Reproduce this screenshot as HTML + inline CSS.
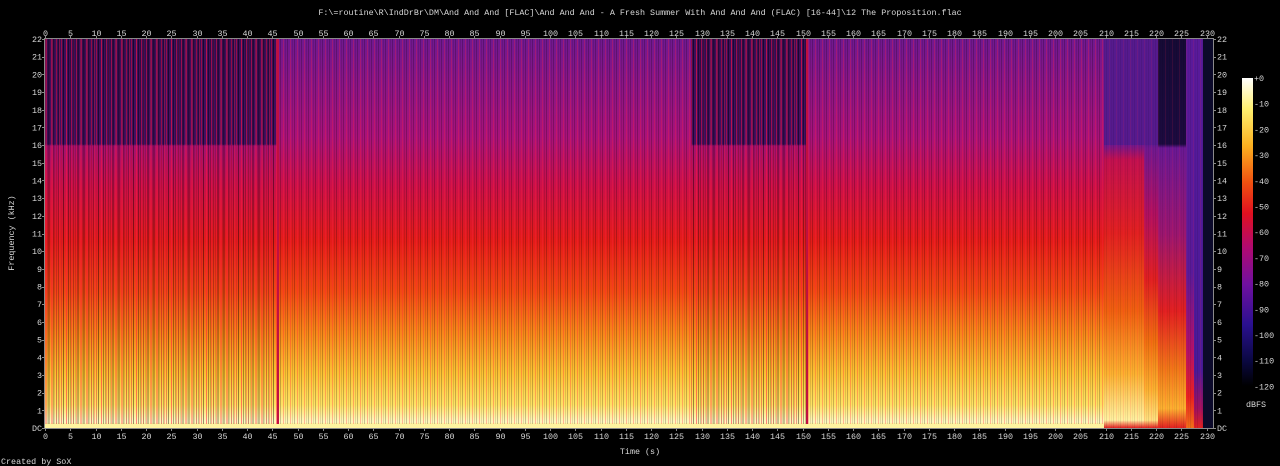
<!DOCTYPE html>
<html><head><meta charset="utf-8"><style>
html,body{margin:0;padding:0;background:#000;}
svg{display:block}
text{font-family:"Liberation Mono",monospace;font-size:8.4px;fill:#d8d8d8;}
</style></head><body>
<svg width="1280" height="466" viewBox="0 0 1280 466" xmlns="http://www.w3.org/2000/svg">
<defs>
<linearGradient id="gB" x1="0" y1="39" x2="0" y2="428" gradientUnits="userSpaceOnUse">
<stop offset="0" stop-color="#701890"/><stop offset="0.25" stop-color="#a8127a"/>
<stop offset="0.38" stop-color="#cc1048"/><stop offset="0.52" stop-color="#e41c18"/>
<stop offset="0.65" stop-color="#f24a12"/><stop offset="0.76" stop-color="#f88a1a"/>
<stop offset="0.86" stop-color="#fcc234"/><stop offset="0.94" stop-color="#ffe264"/>
<stop offset="0.985" stop-color="#fff8c0"/><stop offset="1" stop-color="#ffe040"/>
</linearGradient>
<linearGradient id="gA" x1="0" y1="39" x2="0" y2="428" gradientUnits="userSpaceOnUse">
<stop offset="0" stop-color="#3a0e58"/><stop offset="0.27" stop-color="#440f62"/>
<stop offset="0.275" stop-color="#a61070"/>
<stop offset="0.38" stop-color="#c81048"/><stop offset="0.52" stop-color="#e21c1a"/>
<stop offset="0.65" stop-color="#f04814"/><stop offset="0.76" stop-color="#f68618"/>
<stop offset="0.86" stop-color="#fbc030"/><stop offset="0.94" stop-color="#ffe060"/>
<stop offset="0.985" stop-color="#fff8c0"/><stop offset="1" stop-color="#ffe040"/>
</linearGradient>
<linearGradient id="gE1" x1="0" y1="39" x2="0" y2="428" gradientUnits="userSpaceOnUse">
<stop offset="0" stop-color="#5a1a90"/><stop offset="0.27" stop-color="#6c1890"/>
<stop offset="0.31" stop-color="#c01050"/><stop offset="0.5" stop-color="#e02020"/>
<stop offset="0.7" stop-color="#f06010"/><stop offset="0.86" stop-color="#fcb030"/>
<stop offset="0.98" stop-color="#fff0a0"/><stop offset="1" stop-color="#e02020"/>
</linearGradient>
<linearGradient id="gE2" x1="0" y1="39" x2="0" y2="428" gradientUnits="userSpaceOnUse">
<stop offset="0" stop-color="#5a1a90"/><stop offset="0.27" stop-color="#5c1a90"/>
<stop offset="0.28" stop-color="#701890"/><stop offset="0.45" stop-color="#b01060"/>
<stop offset="0.62" stop-color="#e02020"/><stop offset="0.78" stop-color="#f07010"/>
<stop offset="0.9" stop-color="#fcb030"/><stop offset="0.98" stop-color="#ffe080"/><stop offset="1" stop-color="#e02020"/>
</linearGradient>
<linearGradient id="gE3" x1="0" y1="39" x2="0" y2="428" gradientUnits="userSpaceOnUse">
<stop offset="0" stop-color="#160a36"/><stop offset="0.27" stop-color="#1c0a40"/>
<stop offset="0.28" stop-color="#6a1894"/><stop offset="0.5" stop-color="#9a1670"/>
<stop offset="0.7" stop-color="#e02020"/><stop offset="0.85" stop-color="#f07818"/>
<stop offset="0.95" stop-color="#fcb030"/><stop offset="1" stop-color="#e02020"/>
</linearGradient>
<linearGradient id="gE4" x1="0" y1="39" x2="0" y2="428" gradientUnits="userSpaceOnUse">
<stop offset="0" stop-color="#5a1a9a"/><stop offset="0.6" stop-color="#5a1a9a"/>
<stop offset="0.8" stop-color="#b0106a"/><stop offset="0.92" stop-color="#e82020"/><stop offset="1" stop-color="#f07018"/>
</linearGradient>
<linearGradient id="gE5" x1="0" y1="39" x2="0" y2="428" gradientUnits="userSpaceOnUse">
<stop offset="0" stop-color="#5a1a9a"/><stop offset="0.85" stop-color="#4a1a9a"/>
<stop offset="0.95" stop-color="#a01060"/><stop offset="1" stop-color="#e02020"/>
</linearGradient>
<linearGradient id="cb" x1="0" y1="78" x2="0" y2="386" gradientUnits="userSpaceOnUse">
<stop offset="0" stop-color="#ffffff"/><stop offset="0.1" stop-color="#fff070"/>
<stop offset="0.22" stop-color="#fcb020"/><stop offset="0.34" stop-color="#f05010"/>
<stop offset="0.44" stop-color="#e01020"/><stop offset="0.55" stop-color="#b00a70"/>
<stop offset="0.67" stop-color="#7010a0"/><stop offset="0.8" stop-color="#2a1090"/>
<stop offset="0.92" stop-color="#0a0840"/><stop offset="1" stop-color="#000000"/>
</linearGradient>
<pattern id="st" x="0" y="0" width="7" height="10" patternUnits="userSpaceOnUse">
<rect x="0" y="0" width="1" height="10" fill="#000" opacity="0.22"/>
<rect x="3" y="0" width="1" height="10" fill="#ff2040" opacity="0.3"/>
<rect x="5" y="0" width="1" height="10" fill="#000" opacity="0.12"/>
</pattern>
<pattern id="st2" x="0" y="0" width="5" height="10" patternUnits="userSpaceOnUse">
<rect x="1" y="0" width="1" height="10" fill="#ff1040" opacity="0.5"/>
<rect x="3" y="0" width="1" height="10" fill="#000" opacity="0.4"/>
</pattern>
</defs>

<text x="640" y="15" text-anchor="middle">F:\=routine\R\IndDrBr\DM\And And And [FLAC]\And And And - A Fresh Summer With And And And (FLAC) [16-44]\12 The Proposition.flac</text>

<rect x="45" y="39" width="233" height="389" fill="url(#gA)"/>
<rect x="278" y="39" width="413" height="389" fill="url(#gB)"/>
<rect x="691" y="39" width="116" height="389" fill="url(#gA)"/>
<rect x="807" y="39" width="297" height="389" fill="url(#gB)"/>
<rect x="1104" y="39" width="40" height="389" fill="url(#gE1)"/>
<rect x="1144" y="39" width="14" height="389" fill="url(#gE2)"/>
<rect x="1158" y="39" width="28" height="389" fill="url(#gE3)"/>
<rect x="1186" y="39" width="8" height="389" fill="url(#gE4)"/>
<rect x="1194" y="39" width="9" height="389" fill="url(#gE5)"/>
<rect x="1203" y="39" width="11" height="389" fill="#0c0a2a"/>
<rect x="1104" y="39" width="54" height="106" fill="#561a8e"/>
<rect x="45" y="39" width="1059" height="389" fill="url(#st)"/>
<rect x="45" y="39" width="233" height="390" fill="url(#st2)" opacity="0.6"/>
<rect x="691" y="39" width="116" height="390" fill="url(#st2)" opacity="0.6"/>
<rect x="45" y="39" width="233" height="106" fill="url(#st2)" opacity="0.5"/>
<rect x="691" y="39" width="116" height="106" fill="url(#st2)" opacity="0.5"/>
<rect x="1104" y="39" width="99" height="389" fill="url(#st)" opacity="0.4"/>
<rect x="277" y="39" width="2" height="385" fill="#c01040"/>
<rect x="806" y="39" width="2" height="385" fill="#c01040"/>
<rect x="45" y="424" width="1059" height="4" fill="#fff4a0"/>

<rect x="44.5" y="38.5" width="1169" height="390" fill="none" stroke="#8a8a8a" stroke-width="1"/>

<rect x="1242" y="78" width="11" height="308" fill="url(#cb)"/>

<text x="640" y="454" text-anchor="middle">Time (s)</text>
<text x="14" y="233" text-anchor="middle" transform="rotate(-90 14 233)">Frequency (kHz)</text>
<text x="1256" y="407" text-anchor="middle">dBFS</text>
<text x="1" y="464" text-anchor="start">Created by SoX</text>
</svg>
<script>
(function(){
var ns="http://www.w3.org/2000/svg",svg=document.querySelector("svg");
function T(x,y,s,a){var t=document.createElementNS(ns,"text");t.setAttribute("x",x);t.setAttribute("y",y);t.setAttribute("text-anchor",a||"middle");t.textContent=s;svg.appendChild(t);}
function L(x1,y1,x2,y2){var l=document.createElementNS(ns,"line");l.setAttribute("x1",x1);l.setAttribute("y1",y1);l.setAttribute("x2",x2);l.setAttribute("y2",y2);l.setAttribute("stroke","#8a8a8a");svg.appendChild(l);}
for(var t=0;t<=230;t+=5){var x=45+t*5.05;x=Math.round(x)+0.5;T(x,36,""+t);T(x,439,""+t);L(x,36,x,38);L(x,429,x,431);}
for(var k=0;k<=22;k++){var y=428-k*17.68;var s=k==0?"DC":""+k;T(42,y+3,s,"end");T(1217,y+3,s,"start");L(42,Math.round(y)+.5,44,Math.round(y)+.5);L(1214,Math.round(y)+.5,1216,Math.round(y)+.5);}
for(var d=0;d<=12;d++){var y=78+d*25.7;T(1254,y+3,(d==0?"+0":"-"+d*10),"start");}
})();
</script>
</body></html>
